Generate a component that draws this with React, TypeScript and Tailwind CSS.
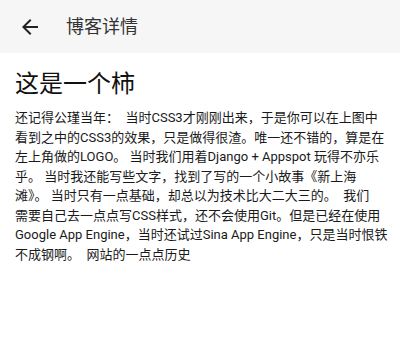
import React from "react";

const lines = [
  "还记得公瑾当年：  当时CSS3才刚刚出来，于是你可以在上图中",
  "看到之中的CSS3的效果，只是做得很渣。唯一还不错的，算是在",
  "左上角做的LOGO。 当时我们用着Django + Appspot 玩得不亦乐",
  "乎。 当时我还能写些文字，找到了写的一个小故事《新上海",
  "滩》。 当时只有一点基础，却总以为技术比大二大三的。  我们",
  "需要自己去一点点写CSS样式，还不会使用Git。但是已经在使用",
  "Google App Engine，当时还试过Sina App Engine，只是当时恨铁",
  "不成钢啊。  网站的一点点历史",
];

export default function App() {
  return (
    <div
      className="w-[400px] h-[363px] flex bg-white overflow-hidden"
      style={{ fontFamily: "Roboto, 'Noto Sans CJK SC', sans-serif" }}
    >
      <div className="w-px bg-[#ececec]" />
      <div className="flex-1 flex flex-col">
        <div className="h-[53px] bg-[#f6f6f6] flex items-center">
          <svg width="24" height="24" viewBox="0 0 24 24" className="ml-[18px] text-[#222]">
            <path
              fill="currentColor"
              d="M20 11H7.83l5.59-5.59L12 4l-8 8 8 8 1.41-1.41L7.83 13H20v-2z"
            />
          </svg>
          <span className="ml-[24px] text-[18px] text-[#333]">博客详情</span>
        </div>
        <div className="px-[15px] pt-[13px]">
          <h1 className="text-[24px] leading-[36px] text-[#111]">这是一个柿</h1>
          <p className="mt-[6px] text-[13px] leading-[19.5px] text-[#1a1a1a]">
            {lines.map((l, i) => (
              <span key={i} className="block whitespace-pre">
                {l}
              </span>
            ))}
          </p>
        </div>
      </div>
      <div className="w-[3px] bg-[#e6e6e6]" />
    </div>
  );
}
